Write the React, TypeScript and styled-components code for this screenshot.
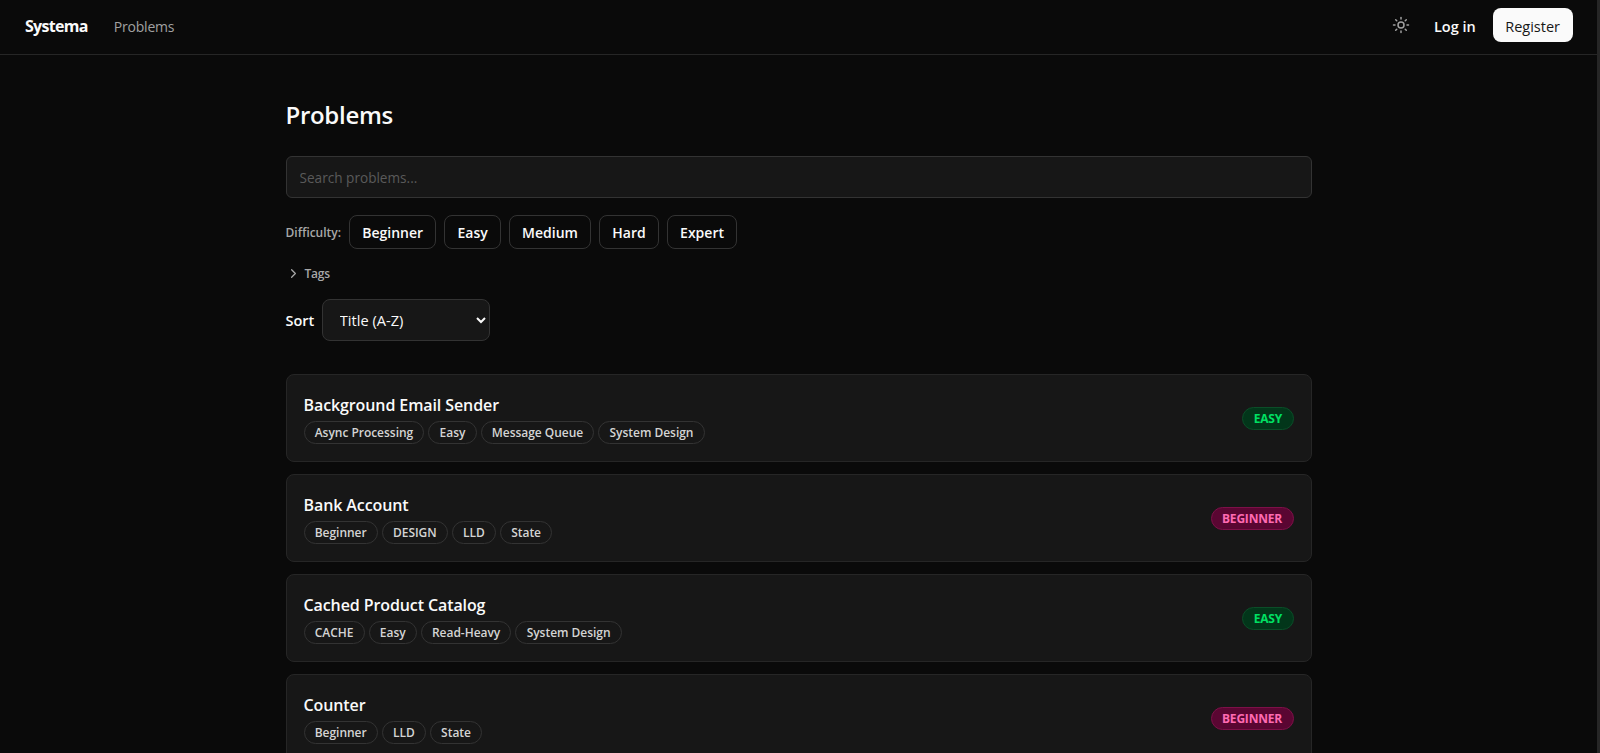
import styled, { createGlobalStyle } from 'styled-components';
import { ChevronRight, Sun } from 'lucide-react';

const Global = createGlobalStyle`
    * {
        box-sizing: border-box;
    }
    html, body {
        margin: 0;
        height: 100%;
        overflow: hidden;
        background: #262626;
    }
    body {
        font-family: "Open Sans", "Noto Sans", sans-serif;
        color: #fafafa;
    }
`;

const Page = styled.div`
    height: 753px;
    overflow: hidden;
    margin-right: 3px;
    background: #0a0a0a;
`;

const Nav = styled.nav`
    display: flex;
    align-items: center;
    justify-content: space-between;
    height: 55px;
    padding: 0 24.5px 4px 25px;
    border-bottom: 1px solid #262626;
`;

const NavGroup = styled.div`
    display: flex;
    align-items: center;
`;

const Brand = styled.span`
    padding-top: 2px;
    font-size: 16px;
    font-weight: 700;
    letter-spacing: -0.7px;
    margin-right: 26px;
`;

const NavLink = styled.span`
    padding-top: 2px;
    font-size: 14px;
    letter-spacing: -0.2px;
    color: #a1a1a1;
`;

const ThemeToggle = styled.span`
    display: flex;
    color: #a1a1a1;
    margin-right: 23.5px;
`;

const LogIn = styled.span`
    padding-top: 2px;
    font-size: 14.5px;
    font-weight: 600;
    margin-right: 17px;
`;

const Register = styled.span`
    display: flex;
    align-items: center;
    height: 34px;
    padding: 2px 12.5px 0;
    font-size: 14.5px;
    color: #171717;
    background: #fafafa;
    border-radius: 8px;
`;

const Main = styled.main`
    width: 1026px;
    margin: 0 auto;
    padding-top: 44px;
`;

const Title = styled.h1`
    margin: 0 0 25px;
    font-size: 24px;
    line-height: 32px;
    font-weight: 600;
    letter-spacing: -0.3px;
`;

const Search = styled.input`
    display: block;
    width: 100%;
    height: 42px;
    padding: 0 13px;
    font: inherit;
    font-size: 13.6px;
    color: #fafafa;
    background: #171717;
    border: 1px solid #333;
    border-radius: 6px;
    outline: none;

    &::placeholder {
        color: #5a5a5a;
    }
`;

const FilterRow = styled.div`
    display: flex;
    align-items: center;
    gap: 8px;
    margin-top: 17px;
`;

const FilterLabel = styled.span`
    font-size: 12px;
    font-weight: 600;
    color: #a8a8a8;
`;

const Chip = styled.button`
    height: 34px;
    padding: 0 12.2px;
    font: inherit;
    font-size: 14px;
    font-weight: 600;
    color: #fafafa;
    background: #0a0a0a;
    border: 1px solid #333;
    border-radius: 8px;
`;

const TagsToggle = styled.div`
    display: flex;
    align-items: center;
    gap: 4px;
    margin-top: 16px;
    font-size: 12px;
    font-weight: 600;
    letter-spacing: -0.2px;
    color: #a8a8a8;
`;

const SortRow = styled.div`
    display: flex;
    align-items: center;
    gap: 8px;
    margin-top: 17px;
`;

const SortLabel = styled.label`
    font-size: 14.5px;
    font-weight: 600;
`;

const Select = styled.select`
    width: 168px;
    height: 42px;
    padding: 0 12.5px;
    font: inherit;
    font-size: 14.6px;
    color: #fafafa;
    background: #171717;
    border: 1px solid #333;
    border-radius: 8px;
`;

const List = styled.div`
    display: flex;
    flex-direction: column;
    gap: 12px;
    margin-top: 33px;
`;

const Card = styled.article`
    display: flex;
    align-items: center;
    justify-content: space-between;
    flex-shrink: 0;
    height: 88px;
    padding: 0 17px;
    background: #171717;
    border: 1px solid #262626;
    border-radius: 8px;
`;

const CardBody = styled.div`
    padding-top: 1px;
`;

const CardTitle = styled.h2`
    margin: 0 0 4px;
    font-size: 16px;
    line-height: 24px;
    font-weight: 600;
    letter-spacing: -0.1px;
`;

const TagRow = styled.div`
    display: flex;
    gap: 4px;
`;

const Tag = styled.span`
    display: flex;
    align-items: center;
    height: 23px;
    padding: 0 10.2px;
    font-size: 12px;
    font-weight: 600;
    letter-spacing: -0.03px;
    color: #d4d4d4;
    border: 1px solid #333;
    border-radius: 999px;
`;

const levelColors = {
    EASY: { color: '#00e063', background: '#02361a', border: '#0b4d28' },
    BEGINNER: { color: '#ff6ab2', background: '#5a0632', border: '#7d1048' },
};

type Level = keyof typeof levelColors;

const Badge = styled.span<{ $level: Level }>`
    display: flex;
    align-items: center;
    height: 23px;
    padding: 0 10.5px;
    font-size: 12px;
    font-weight: 700;
    letter-spacing: -0.2px;
    color: ${(props) => levelColors[props.$level].color};
    background: ${(props) => levelColors[props.$level].background};
    border: 1px solid ${(props) => levelColors[props.$level].border};
    border-radius: 999px;
`;

const problems: { title: string; tags: string[]; level: Level }[] = [
    { title: 'Background Email Sender', tags: ['Async Processing', 'Easy', 'Message Queue', 'System Design'], level: 'EASY' },
    { title: 'Bank Account', tags: ['Beginner', 'DESIGN', 'LLD', 'State'], level: 'BEGINNER' },
    { title: 'Cached Product Catalog', tags: ['CACHE', 'Easy', 'Read-Heavy', 'System Design'], level: 'EASY' },
    { title: 'Counter', tags: ['Beginner', 'LLD', 'State'], level: 'BEGINNER' },
];

const difficulties = ['Beginner', 'Easy', 'Medium', 'Hard', 'Expert'];

const App = () => (
    <Page>
        <Global />
        <Nav>
            <NavGroup>
                <Brand>Systema</Brand>
                <NavLink>Problems</NavLink>
            </NavGroup>
            <NavGroup>
                <ThemeToggle>
                    <Sun size={18} />
                </ThemeToggle>
                <LogIn>Log in</LogIn>
                <Register>Register</Register>
            </NavGroup>
        </Nav>
        <Main>
            <Title>Problems</Title>
            <Search placeholder="Search problems..." />
            <FilterRow>
                <FilterLabel>Difficulty:</FilterLabel>
                {difficulties.map((name) => (
                    <Chip key={name}>{name}</Chip>
                ))}
            </FilterRow>
            <TagsToggle>
                <ChevronRight size={15} />
                Tags
            </TagsToggle>
            <SortRow>
                <SortLabel>Sort</SortLabel>
                <Select defaultValue="title">
                    <option value="title">Title (A-Z)</option>
                </Select>
            </SortRow>
            <List>
                {problems.map((problem) => (
                    <Card key={problem.title}>
                        <CardBody>
                            <CardTitle>{problem.title}</CardTitle>
                            <TagRow>
                                {problem.tags.map((tag) => (
                                    <Tag key={tag}>{tag}</Tag>
                                ))}
                            </TagRow>
                        </CardBody>
                        <Badge $level={problem.level}>{problem.level}</Badge>
                    </Card>
                ))}
            </List>
        </Main>
    </Page>
);

export default App;
